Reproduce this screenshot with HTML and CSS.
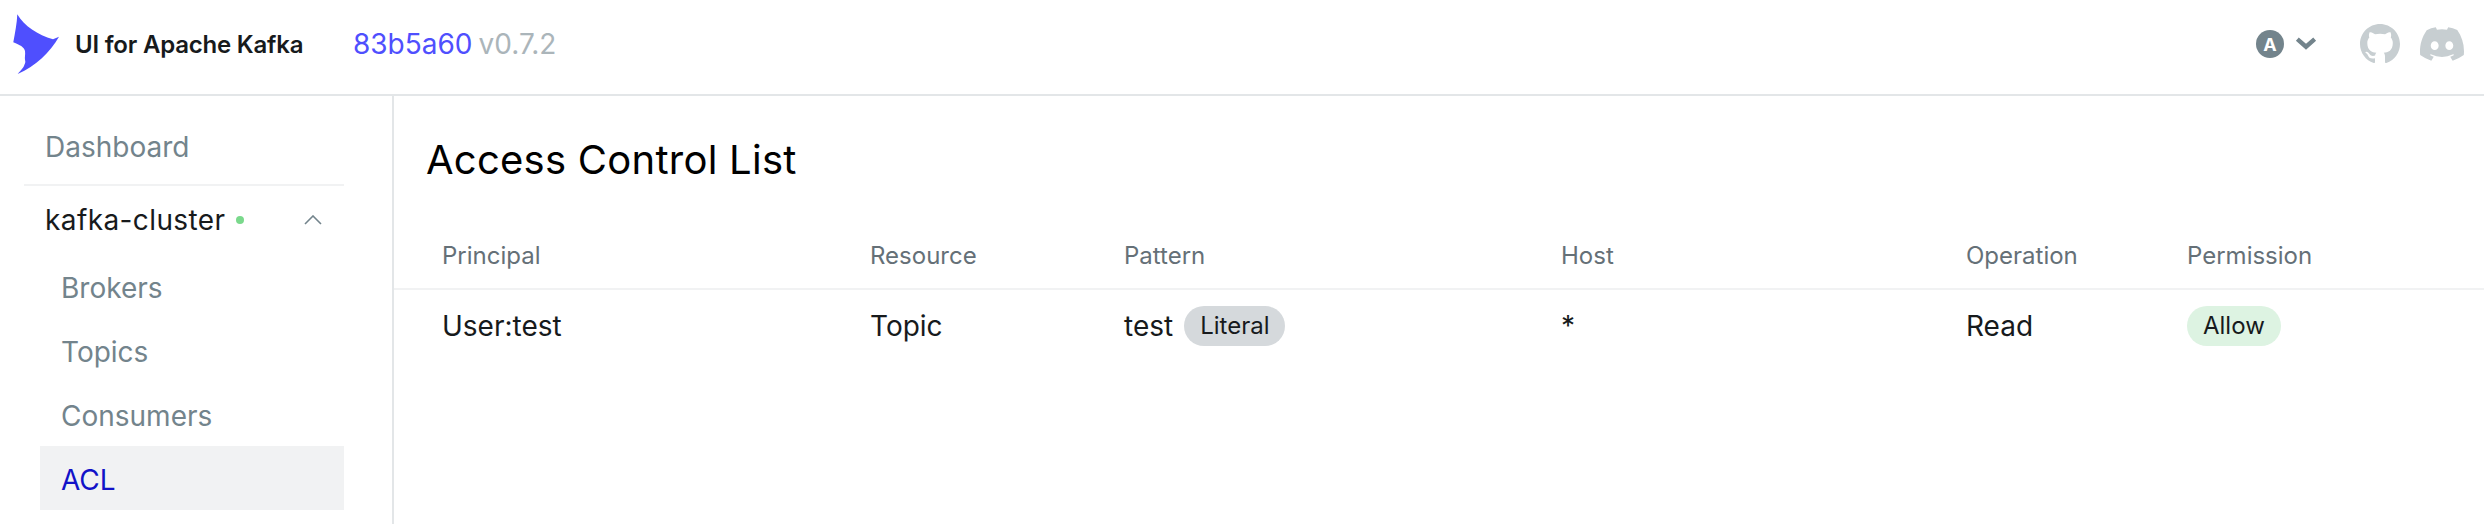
FILE: index.html
```html
<!DOCTYPE html>
<html lang="en">
<head>
<meta charset="utf-8">
<title>UI for Apache Kafka</title>
<link rel="stylesheet" href="styles.css">
</head>
<body>
<header class="navbar">
  <div class="brand">
    <svg class="logo" viewBox="0 0 70 80"><path d="M17.3 9.3C24 21 38 30 53 34.3L59 31.7C50 47 36 61 17.7 69C21 65 24 62 24.3 60C25.5 58 25.5 56 25 55C24.5 52 25.5 50 25 46C24 42 20 40 13.3 37.3C15 28 17 18 17.3 9.3Z"/></svg>
    <span class="brand-name">UI for Apache Kafka</span>
  </div>
  <div class="version"><a class="commit">83b5a60</a><span class="tag">v0.7.2</span></div>
  <div class="nav-actions">
    <div class="user">
      <span class="avatar">A</span>
      <svg class="caret" viewBox="0 0 20 12"><path d="M2 2L10 9L18 2"/></svg>
    </div>
    <svg class="gh" viewBox="0 0 16 16"><path d="M8 0C3.58 0 0 3.58 0 8c0 3.54 2.29 6.53 5.47 7.59.4.07.55-.17.55-.38 0-.19-.01-.82-.01-1.49-2.01.37-2.53-.49-2.69-.94-.09-.23-.48-.94-.82-1.13-.28-.15-.68-.52-.01-.53.63-.01 1.08.58 1.23.82.72 1.21 1.87.87 2.33.66.07-.52.28-.87.51-1.07-1.78-.2-3.64-.89-3.64-3.95 0-.87.31-1.59.82-2.15-.08-.2-.36-1.02.08-2.12 0 0 .67-.21 2.2.82.64-.18 1.32-.27 2-.27s1.36.09 2 .27c1.53-1.04 2.2-.82 2.2-.82.44 1.1.16 1.92.08 2.12.51.56.82 1.27.82 2.15 0 3.07-1.87 3.75-3.65 3.95.29.25.54.73.54 1.48 0 1.07-.01 1.93-.01 2.2 0 .21.15.46.55.38A8.01 8.01 0 0 0 16 8c0-4.42-3.58-8-8-8z"/></svg>
    <svg class="discord" viewBox="0 0 127.14 96.36"><path d="M107.7 8.07A105.15 105.15 0 0 0 81.47 0a72.06 72.06 0 0 0-3.36 6.83 97.68 97.68 0 0 0-29.11 0A72.37 72.37 0 0 0 45.64 0a105.89 105.89 0 0 0-26.25 8.09C2.79 32.65-1.71 56.6.54 80.21a105.73 105.73 0 0 0 32.17 16.15 77.7 77.7 0 0 0 6.89-11.11 68.42 68.42 0 0 1-10.85-5.18c.91-.66 1.8-1.34 2.66-2a75.57 75.57 0 0 0 64.32 0c.87.71 1.76 1.39 2.66 2a68.68 68.68 0 0 1-10.87 5.19 77 77 0 0 0 6.89 11.1 105.25 105.25 0 0 0 32.19-16.14c2.64-27.38-4.51-51.11-18.9-72.15zM42.45 65.69C36.18 65.69 31 60 31 53s5-12.74 11.43-12.74S54 46 53.89 53s-5.05 12.69-11.44 12.69zm42.24 0C78.41 65.69 73.25 60 73.25 53s5-12.74 11.44-12.74S96.23 46 96.12 53s-5.04 12.69-11.43 12.69z"/></svg>
  </div>
</header>
<div class="layout">
  <aside class="sidebar">
    <div class="nav-top">Dashboard</div>
    <div class="cluster">
      <span class="cluster-name">kafka-cluster</span>
      <span class="dot"></span>
      <svg class="chevron" viewBox="0 0 18 10"><path d="M1 9L9 1L17 9"/></svg>
    </div>
    <ul class="menu">
      <li class="menu-item">Brokers</li>
      <li class="menu-item">Topics</li>
      <li class="menu-item">Consumers</li>
      <li class="menu-item active">ACL</li>
    </ul>
  </aside>
  <main class="content">
    <h1 class="title">Access Control List</h1>
    <table class="acl">
      <thead>
        <tr>
          <th class="c1">Principal</th><th class="c2">Resource</th><th class="c3">Pattern</th><th class="c4">Host</th><th class="c5">Operation</th><th class="c6">Permission</th>
        </tr>
      </thead>
      <tbody>
        <tr>
          <td>User:test</td><td>Topic</td>
          <td><div class="pattern-cell"><span>test</span><span class="chip chip-gray">Literal</span></div></td>
          <td>*</td><td>Read</td>
          <td><span class="chip chip-green">Allow</span></td>
        </tr>
      </tbody>
    </table>
  </main>
</div>
</body>
</html>
```
FILE: styles.css
```css
* { box-sizing: border-box; }
html, body { margin: 0; padding: 0; height: 100%; overflow: hidden; }
body { background: #fff; color: #171a1c; font-family: Inter, "Liberation Sans", sans-serif; width: 2484px; height: 524px; }
.navbar { height: 96px; border-bottom: 2px solid #e3e6e8; display: flex; align-items: center; padding-bottom: 6px; }
.brand { display: flex; align-items: center; width: 353px; }
.logo { width: 70px; height: 80px; fill: #4f4ffe; flex: none; margin: 2px 5px 0 0; }
.brand-name { font-size: 24px; font-weight: 600; letter-spacing: -0.2px; }
.version { font-size: 28px; }
.commit { color: #4f4ffe; }
.tag { color: #abb5ba; margin-left: 6px; }
.nav-actions { margin-left: auto; display: flex; align-items: center; padding-right: 20px; }
.user { display: flex; align-items: center; gap: 11px; margin-right: 43px; }
.avatar { width: 28px; height: 28px; border-radius: 50%; background: #73848c; color: #fff; font-size: 18px; font-weight: 700; display: flex; align-items: center; justify-content: center; }
.caret { width: 22px; height: 13px; margin-top: -2px; fill: none; stroke: #73848c; stroke-width: 4; }
.gh { width: 40px; height: 40px; fill: #c7ced1; margin-right: 20px; }
.discord { width: 44px; height: 34px; fill: #c7ced1; }
.layout { display: flex; height: 428px; }
.sidebar { width: 394px; flex: none; border-right: 2px solid #e3e6e8; padding: 0 48px 0 24px; }
.nav-top { height: 90px; padding: 14px 0 0 21px; display: flex; align-items: center; font-size: 28px; color: #73848c; border-bottom: 2px solid #f1f2f3; }
.cluster { height: 68px; padding: 0 22px 0 21px; display: flex; align-items: center; font-size: 28px; letter-spacing: 0.4px; }
.dot { width: 8px; height: 8px; border-radius: 50%; background: #7ad98c; margin-left: 10px; }
.chevron { width: 18px; height: 10px; margin-left: auto; fill: none; stroke: #73848c; stroke-width: 1.6; }
.menu { list-style: none; margin: 0; padding: 0 0 0 16px; }
.menu-item { height: 64px; padding: 4px 0 0 21px; display: flex; align-items: center; font-size: 28px; color: #73848c; }
.menu-item.active { background: #f1f2f3; color: #1212c8; }
.content { flex: 1; min-width: 0; }
.title { margin: 0; padding: 37px 0 0 32px; height: 126px; font-size: 40px; font-weight: 400; letter-spacing: 0.25px; line-height: 54px; color: #000; }
.acl { border-collapse: collapse; table-layout: fixed; width: 100%; }
.acl th { text-align: left; font-size: 24px; font-weight: 400; color: #657077; height: 67px; padding: 0 0 0 48px; border-bottom: 2px solid #f1f2f3; }
.acl td { font-size: 28px; height: 72px; padding: 0 0 0 48px; }
.acl .c1 { width: 428px; }
.acl .c2 { width: 254px; }
.acl .c3 { width: 437px; }
.acl .c4 { width: 405px; }
.acl .c5 { width: 221px; }
.pattern-cell { display: flex; align-items: center; gap: 11px; }
.chip { display: inline-flex; align-items: center; height: 40px; padding: 0 16px; border-radius: 20px; font-size: 24px; vertical-align: middle; }
.chip-gray { background: #d5d9dc; }
.chip-green { background: #ddf3e2; }
```
